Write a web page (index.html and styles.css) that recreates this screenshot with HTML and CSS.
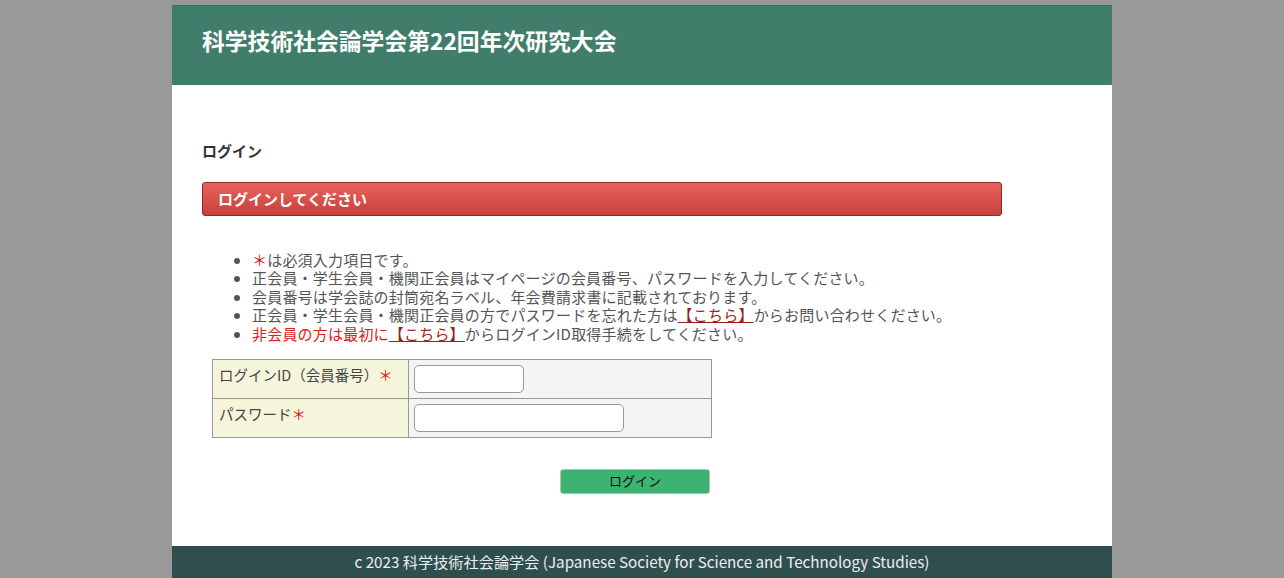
FILE: index.html
```html
<!DOCTYPE html>
<html lang="ja">
<head>
    <meta charset="UTF-8">
    <title>ログイン - 科学技術社会論学会第22回年次研究大会</title>
    <link rel="stylesheet" href="styles.css">
</head>
<body>
    <div class="container">
        <div class="header">
            <h1>科学技術社会論学会第22回年次研究大会</h1>
        </div>

        <div class="main">
            <h2>ログイン</h2>
            <div class="alert">ログインしてください</div>

            <ul class="notes">
                <li><span class="req">＊</span>は必須入力項目です。</li>
                <li>正会員・学生会員・機関正会員はマイページの会員番号、パスワードを入力してください。</li>
                <li>会員番号は学会誌の封筒宛名ラベル、年会費請求書に記載されております。</li>
                <li>正会員・学生会員・機関正会員の方でパスワードを忘れた方は<a href="#">【こちら】</a>からお問い合わせください。</li>
                <li><span class="req">非会員の方は最初に</span><a href="#">【こちら】</a>からログインID取得手続をしてください。</li>
            </ul>

            <form class="login-form">
                <table class="form-table">
                    <tr>
                        <th>ログインID（会員番号）<span class="req">＊</span></th>
                        <td><input type="text" class="input-short"></td>
                    </tr>
                    <tr>
                        <th>パスワード<span class="req">＊</span></th>
                        <td><input type="password" class="input-long"></td>
                    </tr>
                </table>
                <div class="actions">
                    <button type="submit" class="btn">ログイン</button>
                </div>
            </form>
        </div>

        <div class="footer">c 2023 科学技術社会論学会 (Japanese Society for Science and Technology Studies)</div>
    </div>
</body>
</html>
```

FILE: styles.css
```css
* {
    margin: 0;
    padding: 0;
    box-sizing: border-box;
}

body {
    font-family: "Noto Sans CJK JP", "Noto Sans", sans-serif;
    background: #999;
    color: #555;
}

.container {
    width: 940px;
    margin: 5px auto 0;
    background: #fff;
}

.header {
    background: #417d6b;
    height: 80px;
    padding-left: 30px;
    border-top: 1px solid #3a6e5f;
}

.header h1 {
    color: #fff;
    font-size: 22.8px;
    font-weight: 700;
    line-height: 70px;
}

.main {
    padding: 56px 30px 52px;
}

.main h2 {
    font-size: 15px;
    font-weight: 700;
    color: #333;
    line-height: 20px;
    margin-bottom: 21px;
}

.alert {
    width: 800px;
    height: 34px;
    line-height: 32px;
    padding-left: 15px;
    color: #fff;
    font-size: 15px;
    font-weight: 700;
    background: linear-gradient(#ea625c, #c8403b);
    border: 1px solid #8a2b28;
    border-radius: 3px;
}

.notes {
    margin-top: 35px;
    padding-left: 50px;
    font-size: 15px;
    line-height: 18.4px;
    letter-spacing: 0.2px;
    color: #555;
}

.notes li {
    list-style: disc;
}

.req {
    color: #e0201a;
}

.notes a {
    color: #9b2020;
    text-decoration: underline;
}

.form-table {
    margin: 16px 0 0 10px;
    width: 500px;
    border-collapse: collapse;
    font-size: 14.5px;
}

.form-table th,
.form-table td {
    border: 1px solid #999;
    height: 39px;
    vertical-align: top;
}

.form-table th {
    width: 196px;
    background: #f5f5dc;
    font-weight: 400;
    text-align: left;
    color: #444;
    padding: 5px 6px;
    line-height: 20px;
}

.form-table td {
    background: #f4f4f4;
    padding: 5px 5px;
}

.form-table input {
    height: 28px;
    border: 1px solid #999;
    border-radius: 5px;
    background: #fff;
    font-size: 14px;
    padding: 0 5px;
}

.input-short {
    width: 110px;
}

.input-long {
    width: 210px;
}

.actions {
    margin-top: 29px;
    padding-left: 358px;
}

.btn {
    width: 150px;
    height: 25px;
    background: #3cb371;
    border: 1px solid #bbb;
    border-radius: 3px;
    color: #111;
    font-family: "Noto Sans CJK JP", sans-serif;
    font-size: 13px;
    line-height: 22px;
    cursor: pointer;
}

.footer {
    background: #2f4f4f;
    color: #eee;
    text-align: center;
    font-size: 15.2px;
    height: 32px;
    line-height: 30px;
}
```
